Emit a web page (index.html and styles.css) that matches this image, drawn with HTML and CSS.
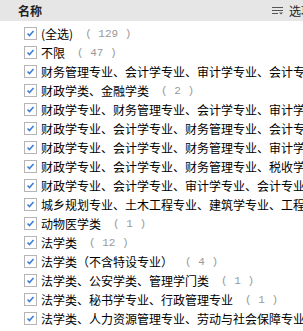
FILE: index.html
```html
<!DOCTYPE html>
<html lang="zh-CN">
<head>
    <meta charset="UTF-8">
    <title>名称筛选</title>
    <link rel="stylesheet" href="styles.css">
</head>
<body>

<div class="panel">
    <div class="panel-head">
        <span class="head-title">名称</span>
        <span class="head-option">
            <svg class="option-icon" width="11" height="9" viewBox="0 0 11 9">
                <path d="M0 1.5h11M0 4.5h11M0 7.5h6" stroke="#555" stroke-width="1" fill="none"/>
                <path d="M7 6.5h4l-2 2z" fill="#555"/>
            </svg>
            选项
        </span>
    </div>

    <ul class="item-list" id="item-list"></ul>
</div>

<script>
    var items = [
        ['(全选)', 129],
        ['不限', 47],
        ['财务管理专业、会计学专业、审计学专业、会计专业', 1],
        ['财政学类、金融学类', 2],
        ['财政学专业、财务管理专业、会计学专业、审计学专业', 1],
        ['财政学专业、会计学专业、财务管理专业、会计专业', 1],
        ['财政学专业、会计学专业、财务管理专业、审计学专业', 1],
        ['财政学专业、会计学专业、财务管理专业、税收学专业', 1],
        ['财政学专业、会计学专业、审计学专业、会计专业', 1],
        ['城乡规划专业、土木工程专业、建筑学专业、工程管理专业', 1],
        ['动物医学类', 1],
        ['法学类', 12],
        ['法学类（不含特设专业）', 4],
        ['法学类、公安学类、管理学门类', 1],
        ['法学类、秘书学专业、行政管理专业', 1],
        ['法学类、人力资源管理专业、劳动与社会保障专业', 1],
        ['法学类、社会学类、政治学类', 1]
    ];

    var check = '<svg class="check" width="13" height="13" viewBox="0 0 13 13">' +
        '<rect x="0.5" y="0.5" width="12" height="12" fill="#fff" stroke="#b5b5b5"/>' +
        '<path d="M3.5 6.5l2 2 4-4.5" stroke="#3d7fd6" stroke-width="1.6" fill="none"/></svg>';

    var list = document.getElementById('item-list');
    items.forEach(function (item) {
        var li = document.createElement('li');
        li.className = 'item';
        li.innerHTML = check + '<span class="item-name">' + item[0] + '</span>' +
            '<span class="item-count">( ' + item[1] + ' )</span>';
        list.appendChild(li);
    });
</script>

</body>
</html>
```

FILE: styles.css
```css
body {
    margin: 0;
    font-family: "Noto Sans CJK SC", "Noto Sans", sans-serif;
    font-size: 12px;
    color: #000;
    background-color: #fff;
    overflow: hidden;
}

.panel {
    width: 303px;
    height: 331px;
    overflow: hidden;
}

.panel-head {
    display: flex;
    justify-content: space-between;
    align-items: center;
    height: 21px;
    padding-left: 18px;
    background-color: #e6e6e6;
    white-space: nowrap;
}

.head-title {
    font-weight: bold;
    color: #222;
}

.head-option {
    display: flex;
    align-items: center;
    gap: 6px;
    margin-right: -10px;
    color: #222;
}

.item-list {
    list-style: none;
    margin: 0;
    padding: 3px 0 0 24px;
}

.item {
    display: flex;
    align-items: center;
    height: 19px;
    white-space: nowrap;
}

.check {
    flex-shrink: 0;
    margin-right: 4px;
}

.item-name {
    flex-shrink: 0;
}

.item-count {
    flex-shrink: 0;
    margin-left: 12px;
    color: #999;
    font-family: "Liberation Mono", monospace;
    font-size: 11px;
}
```
